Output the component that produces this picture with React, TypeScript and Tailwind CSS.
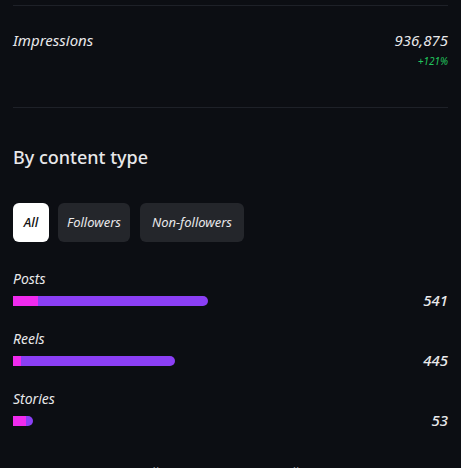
import React from "react";

const rows = [
  { label: "Posts", value: "541", total: 195, pink: 25 },
  { label: "Reels", value: "445", total: 162, pink: 8 },
  { label: "Stories", value: "53", total: 20, pink: 13 },
];

export default function App() {
  return (
    <div
      className="h-[468px] w-[461px] overflow-hidden bg-[#0c0e13] px-[13px] text-[#e8e8ea]"
      style={{ fontFamily: '"Noto Sans", "Liberation Sans", sans-serif' }}
    >
      <div className="mt-[5px] h-px bg-[#1e2128]" />

      {/* impressions */}
      <div className="mt-[24px] flex justify-between">
        <span className="text-[15px] leading-5 italic">Impressions</span>
        <div className="flex flex-col items-end">
          <span className="text-[15px] leading-5 italic">936,875</span>
          <span className="mt-[4px] text-[10px] leading-[14px] italic text-[#22c55e]">+121%</span>
        </div>
      </div>

      <div className="mt-[39px] h-px bg-[#1e2128]" />

      {/* by content type */}
      <h2 className="mt-[37px] text-[18px] leading-6 font-medium">By content type</h2>

      <div className="mt-[34px] flex gap-[9px]">
        <button className="h-[39px] w-[36px] rounded-[6px] bg-white text-[13px] italic font-medium text-[#111]">All</button>
        <button className="h-[39px] rounded-[6px] bg-[#24262b] px-[9px] text-[13px] italic text-[#e8e8ea]">Followers</button>
        <button className="ml-[1px] h-[39px] rounded-[6px] bg-[#24262b] px-[12px] text-[13px] italic text-[#e8e8ea]">Non-followers</button>
      </div>

      <div className="mt-[28px] flex flex-col gap-[24px]">
        {rows.map((r) => (
          <div key={r.label} className="flex items-end justify-between">
            <div className="flex flex-col">
              <span className="text-[14px] leading-[18px] italic">{r.label}</span>
              <div
                className="mt-[8px] flex h-[10px] overflow-hidden rounded-l-[2px] rounded-r-full bg-[#8b3ff5]"
                style={{ width: r.total }}
              >
                <div className="h-full bg-[#f02bee]" style={{ width: r.pink }} />
              </div>
            </div>
            <span className="mb-[-4px] text-[15px] leading-5 italic font-medium">{r.value}</span>
          </div>
        ))}
      </div>

      <div className="mt-[36px] flex gap-[52px] pl-[125px] text-[13px] leading-5 text-[#8a8d94]">
        <span>Followers</span>
        <span>Non-Followers</span>
      </div>
    </div>
  );
}
